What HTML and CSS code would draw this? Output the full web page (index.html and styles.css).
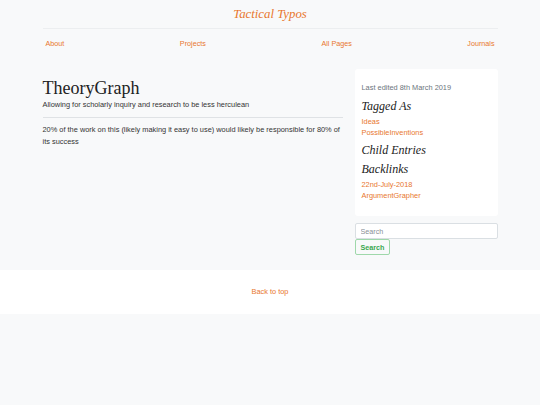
FILE: index.html
```html
<!DOCTYPE html>
<html>
<head>
<meta charset="utf-8">
<link rel="stylesheet" href="styles.css">
</head>
<body>
<header class="site-header">
  <div class="container">
    <h1 class="brand"><a href="#">Tactical Typos</a></h1>
    <nav class="nav">
      <a href="#">About</a>
      <a href="#">Projects</a>
      <a href="#">All Pages</a>
      <a href="#">Journals</a>
    </nav>
  </div>
</header>
<main class="container layout">
  <article class="content">
    <h2 class="page-title">TheoryGraph</h2>
    <p class="lead">Allowing for scholarly inquiry and research to be less herculean</p>
    <hr class="rule">
    <p class="body-text">20% of the work on this (likely making it easy to use) would likely be responsible for 80% of its success</p>
  </article>
  <aside class="sidebar">
    <div class="card">
      <p class="meta">Last edited 8th March 2019</p>
      <h3 class="side-title">Tagged As</h3>
      <ul class="links">
        <li><a href="#">Ideas</a></li>
        <li><a href="#">PossibleInventions</a></li>
      </ul>
      <h3 class="side-title">Child Entries</h3>
      <h3 class="side-title">Backlinks</h3>
      <ul class="links">
        <li><a href="#">22nd-July-2018</a></li>
        <li><a href="#">ArgumentGrapher</a></li>
      </ul>
    </div>
    <form class="search">
      <input class="search-input" type="text" placeholder="Search">
      <button class="search-btn" type="button">Search</button>
    </form>
  </aside>
</main>
<footer class="footer">
  <a href="#">Back to top</a>
</footer>
</body>
</html>
```
FILE: styles.css
```css
* { box-sizing: border-box; }
html, body { margin: 0; padding: 0; }
body {
  background: #f8f9fa;
  font-family: "Liberation Sans", Arial, sans-serif;
  font-size: 7.4px;
  color: #333;
  line-height: 1.5;
}
a { color: #e8772e; text-decoration: none; }
.container { width: 455px; margin: 0 auto; }
.site-header { padding-top: 5px; }
.brand {
  margin: 0;
  text-align: center;
  font-family: "Liberation Serif", "Times New Roman", serif;
  font-style: italic;
  font-weight: normal;
  font-size: 12.8px;
  line-height: 18px;
  padding-bottom: 5px;
  border-bottom: 1px solid #eceef0;
}
.nav {
  display: flex;
  justify-content: space-between;
  padding: 9px 3px 0;
  font-size: 7.2px;
  line-height: 12px;
}
.layout {
  display: flex;
  justify-content: space-between;
  align-items: flex-start;
  margin-top: 19px;
  padding-bottom: 15px;
}
.content { width: 300px; padding-top: 8px; }
.page-title {
  margin: 0;
  font-family: "Liberation Serif", "Times New Roman", serif;
  font-weight: normal;
  font-size: 18px;
  line-height: 22px;
  color: #222;
}
.lead { margin: 0; font-size: 7.4px; line-height: 12px; color: #333; }
.rule { border: 0; border-top: 1px solid #dfe2e5; margin: 6px 0 6px; }
.body-text { margin: 0; line-height: 11.5px; color: #333; }
.sidebar { width: 143px; }
.card {
  background: #fff;
  border-radius: 3px;
  padding: 13px 7px 15px;
}
.meta { margin: 0; color: #6c757d; line-height: 12px; }
.side-title {
  margin: 5px 0 3px;
  font-family: "Liberation Serif", "Times New Roman", serif;
  font-style: italic;
  font-weight: normal;
  font-size: 12px;
  line-height: 14px;
  color: #222;
}
.links { list-style: none; margin: 0; padding: 0; line-height: 11px; }
.search { margin-top: 7px; }
.search-input {
  display: block;
  width: 143px;
  height: 16px;
  border: 1px solid #dadfe3;
  border-radius: 2px;
  padding: 0 5px;
  font-family: "Liberation Sans", Arial, sans-serif;
  font-size: 7.2px;
  background: #fff;
}
.search-input::placeholder { color: #8a9096; }
.search-btn {
  display: block;
  height: 16px;
  padding: 0 5px;
  border: 1px solid #9fd8aa;
  border-radius: 2px;
  background: transparent;
  color: #3aa84f;
  font-family: "Liberation Sans", Arial, sans-serif;
  font-weight: bold;
  font-size: 7.2px;
}
.footer {
  background: #fff;
  text-align: center;
  padding: 16px 0 16px;
  line-height: 12px;
}
```
